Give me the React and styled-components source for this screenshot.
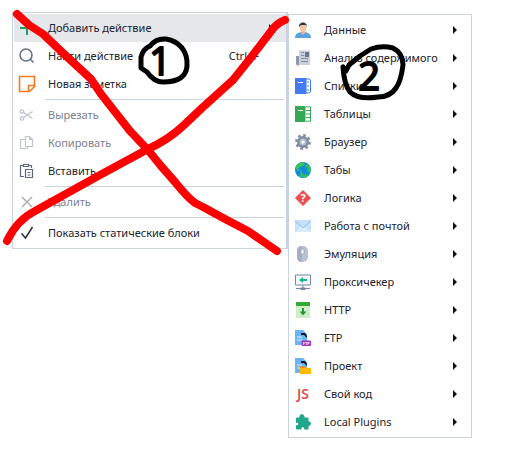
import React from "react";
import styled, { createGlobalStyle } from "styled-components";

const GlobalStyle = createGlobalStyle`
  * { box-sizing: border-box; }
  body { margin: 0; background: #fff; font-family: "Noto Sans", "Open Sans", sans-serif; }
`;

const Page = styled.main`
  position: relative;
  display: flex;
  align-items: flex-start;
  min-height: 100vh;
  padding: 12px;
`;

const Menu = styled.div`
  flex: 0 1 ${(p) => p.$basis}px;
  min-width: 0;
  padding: 1px;
  border: 1px solid #cbd3de;
  background: #fff;
`;

const MainMenu = styled(Menu)`
  padding-right: 0;
  border-right-width: 2px;
`;

const SubMenu = styled(Menu)`
  margin-top: 2px;
`;

const Item = styled.button`
  display: flex;
  align-items: center;
  width: 100%;
  height: 28px;
  padding: 0 13px 0 5px;
  border: 0;
  background: ${(p) => (p.$active ? "#e6e7eb" : "transparent")};
  color: ${(p) => (p.disabled ? "#7c818f" : "#20222e")};
  font-family: inherit;
  font-size: 11px;
  line-height: 16px;
  text-align: left;
  white-space: nowrap;
`;

const Icon = styled.svg`
  flex: none;
  width: 16px;
  height: 16px;
  margin-right: 13px;
  overflow: visible;
  fill: none;
`;

const Label = styled.span`
  flex: 1;
`;

const Shortcut = styled.kbd`
  margin-right: 14px;
  font-family: inherit;
`;

const Arrow = styled.svg`
  flex: none;
  width: 4px;
  height: 8px;
  fill: #11131c;
`;

const Separator = styled.hr`
  height: 1px;
  margin: 1px 2px 1px 31px;
  border: 0;
  background: #cbd3de;
`;

const Notes = styled.svg`
  position: absolute;
  top: 0;
  left: 0;
  width: 525px;
  height: 476px;
  pointer-events: none;
  fill: none;
  stroke-linecap: round;
  stroke-linejoin: round;
`;

const NoteNumber = styled.text`
  font-family: "Open Sans", sans-serif;
  font-size: 38px;
  font-weight: 400;
  text-anchor: middle;
  fill: #000;
  stroke: #000;
  stroke-width: 2px;
`;

const documentShape = (
  <>
    <path d="M0 0h8l4 4v11H0z" fill="#6cb4fa" />
    <path d="M6 3h4l2 3v2L9 5H6z" fill="#101420" />
    <path d="M2 7h5M2 10h5" stroke="#e2f1ff" />
  </>
);

const icons = {
  add: <path d="M8 1v14M1 8h14" stroke="#16a06e" strokeWidth="2" />,
  search: <g stroke="#667085" strokeWidth="1.6"><circle cx="7" cy="7" r="6" /><path d="m11.5 11.5 3 3" /></g>,
  note: <path d="M.5.5h15v10l-5 5H.5zM15 9.5H9.5V15" stroke="#f47a20" strokeWidth="1.6" />,
  cut: <g stroke="#bfc5cf" strokeWidth="1.3"><circle cx="3" cy="4.5" r="1.700" /><circle cx="3" cy="11.5" r="1.700" /><path d="m4.5 5.500 9 6M4.5 10.500l9-6" /></g>,
  copy: <g stroke="#bfc5cf" strokeWidth="1.2"><path d="M6 4.500H1.500v9h7v-2" /><path d="M6.500 1.500h4l3 3v7h-7zM10.500 1.500v3h3" /></g>,
  paste: <g stroke="#5d6880" strokeWidth="1.2"><path d="M5 13.500H1.500v-11h3m5 0h3V5" /><path d="M4.500 1.500h5v2h-5zM6.500 6.500h7v8h-7zM8.500 9.500h3M8.500 12h3" /></g>,
  remove: <path d="m3 3 10 10M13 3 3 13" stroke="#aeb1b6" strokeWidth="1.6" />,
  check: <path d="m2.5 8.5 4 4.5 7-11" stroke="#252832" strokeWidth="1.4" />,
  user: <>
    <path d="M0 16c0-4 3-6 8-6s8 2 8 6z" fill="#5ba0e0" />
    <path d="M6 8h4v3l-2 2-2-2z" fill="#e9b38e" />
    <ellipse cx="8" cy="5.5" rx="3.3" ry="4.3" fill="#f2c6a3" />
    <path d="M4 5c-.5-6 8.500-6 8 0l-1-2H6z" fill="#30343c" />
  </>,
  news: <>
    <path d="M4 .5h11v14.500H4z" fill="#c9d0dc" />
    <path d="M1 6h3v9.500H2L1 14z" fill="#8d98ab" />
    <path d="M10 2h4v5h-4z" fill="#68778e" />
    <path d="M6 2.500h3M6 5.500h3M6 8.500h7M6 11.500h7" stroke="#7f8ca0" />
  </>,
  lists: <>
    <path d="M11 1h2.500q2 0 2 2v10q0 2-2 2H11z" fill="#fff" stroke="#3978f0" />
    <path d="M0 0h11v16H0z" fill="#437bf0" /><path d="M3 4.500h5" stroke="#fff" />
    <path d="M13 3v10" stroke="#437bf0" strokeDasharray="2 2" />
  </>,
  tables: <>
    <path d="M0 0h10.500v16H0z" fill="#35a853" /><path d="M3 4.500h5" stroke="#fff" />
    <path d="M11 .8h4.500v14.400H11M11 4.500h5M11 8h5M11 11.500h5" stroke="#35a853" />
  </>,
  gear: <>
    <circle cx="8" cy="8" r="6" fill="#7f8aa3" />
    <circle cx="8" cy="8" r="6.700" stroke="#7f8aa3" strokeWidth="2.400" strokeDasharray="2.630 2.630" />
    <circle cx="8" cy="8" r="3.500" fill="#b7bfce" /><circle cx="8" cy="8" r="1.600" fill="#fff" />
  </>,
  globe: <>
    <circle cx="8" cy="8" r="8" fill="#118be0" />
    <path d="M8 .2C4 0 1 2.500.3 6L2 8l3 1 1 2-2 3.500 3 1.400 1-4-2-3-3-2 2-2 3-1 2-2z" fill="#36c45c" />
    <path d="M11 2c3 .5 4.800 3 5 6l-2 3-2-2 1-3-3-1zM8 13l4-1 1 2-3 2H8z" fill="#35bf58" />
  </>,
  logic: <>
    <path d="m8 .5 7.500 7.500L8 15.500.5 8z" fill="#e94e4e" stroke="#e94e4e" strokeLinejoin="round" />
    <text x="8" y="12" textAnchor="middle" fontSize="11" fontWeight="700" fill="#fff">?</text>
  </>,
  mail: <>
    <path d="M0 2h16v12H0z" fill="#c5e1fb" /><path d="m0 14 6-6h4l6 6z" fill="#d9ecfd" />
    <path d="m0 3 7 6q1 .8 2 0l7-6" stroke="#8dbbe5" />
  </>,
  mouse: <>
    <rect x="2" width="11" height="16" rx="5" fill="#b9c2d3" />
    <path d="M2 11V5q0-5 5-5v16q-5 0-5-5z" fill="#a5b0c5" />
    <rect x="6" y="3" width="3" height="5" rx="1.500" fill="#f5f7fa" stroke="#8693ab" strokeWidth=".5" />
  </>,
  proxy: <>
    <path d="M.5 1h15v10H.5z" fill="#f4faff" stroke="#77859b" />
    <path d="M8 11v3M1 14.500h14" stroke="#77859b" />
    <path d="M5.500 13.500h5v2.500h-5z" fill="#77859b" />
    <path d="m4 6 4-3v2h4v2H8v2z" fill="#13b786" />
  </>,
  http: <>
    <path d="M1 3h14v13H1z" fill="#cdeec8" /><path d="M1 0h14v4H1z" fill="#35a936" />
    <path d="M8 6v6" stroke="#239a33" strokeWidth="2" /><path d="M4.500 9.500h7L8 13.500z" fill="#239a33" />
  </>,
  ftp: <>
    {documentShape}
    <rect x="6.500" y="10.500" width="9.500" height="5.500" rx="1" fill="#9d32b8" />
    <text x="11.300" y="15" textAnchor="middle" fontSize="4" fontWeight="700" fill="#fff">FTP</text>
  </>,
  project: <>
    {documentShape}
    <path d="M5 8h4l1.500 2H16v6H5z" fill="#ffb900" /><path d="M5 8h4l1.500 2H5z" fill="#e99324" />
  </>,
  js: <text x="8" y="13" textAnchor="middle" fontSize="14" fontWeight="600" fill="#dc5054">JS</text>,
  plugins: <path d="M1.500 4H5c-1.500-4.500 5-4.500 4 0h4v4c3.500-1 3.500 4 0 3.500V15H9.500c.5-3-4-3-3.500 0H1.500v-3.500c3 .5 3-3.500 0-3z" fill="#20a789" stroke="#20a789" strokeLinejoin="round" />,
};

const mainItems = [
  { icon: "add", label: "Добавить действие", active: true, arrow: true },
  { icon: "search", label: "Найти действие", shortcut: "Ctrl+F" },
  { icon: "note", label: "Новая заметка" },
  null,
  { icon: "cut", label: "Вырезать", disabled: true },
  { icon: "copy", label: "Копировать", disabled: true },
  { icon: "paste", label: "Вставить" },
  null,
  { icon: "remove", label: "Удалить", disabled: true },
  null,
  { icon: "check", label: "Показать статические блоки" },
];

const actionItems = [
  ["user", "Данные"],
  ["news", "Анализ содержимого"],
  ["lists", "Списки"],
  ["tables", "Таблицы"],
  ["gear", "Браузер"],
  ["globe", "Табы"],
  ["logic", "Логика"],
  ["mail", "Работа с почтой"],
  ["mouse", "Эмуляция"],
  ["proxy", "Проксичекер"],
  ["http", "HTTP"],
  ["ftp", "FTP"],
  ["project", "Проект"],
  ["js", "Свой код"],
  ["plugins", "Local Plugins"],
].map(([icon, label]) => ({ icon, label, arrow: true }));

function MenuItem({ item }) {
  return (
    <Item type="button" role="menuitem" disabled={item.disabled} $active={item.active} aria-haspopup={item.arrow ? "menu" : undefined}>
      <Icon viewBox="0 0 16 16" aria-hidden="true">{icons[item.icon]}</Icon>
      <Label>{item.label}</Label>
      {item.shortcut && <Shortcut>{item.shortcut}</Shortcut>}
      {item.arrow && <Arrow viewBox="0 0 4 8" aria-hidden="true"><path d="M0 0 4 4 0 8z" /></Arrow>}
    </Item>
  );
}

export default function App() {
  return (
    <>
      <GlobalStyle />
      <Page>
        <MainMenu role="menu" $basis={276}>
          {mainItems.map((item, i) => (item ? <MenuItem key={item.label} item={item} /> : <Separator key={i} />))}
        </MainMenu>
        <SubMenu role="menu" aria-label="Добавить действие" $basis={184}>
          {actionItems.map((item) => <MenuItem key={item.label} item={item} />)}
        </SubMenu>
        <Notes viewBox="0 0 525 476">
          <g stroke="#f00" strokeWidth="8">
            <path d="M17 14 29 25 43 34 64 54 91 79 101 94 130 131 148 150 161 166 175 182 Q187 197 195 203 L203 207 225 219 248 231 277 251" />
            <path d="M285 20Q277 23 272 30L249 60 233 80 202 108 183 126Q168 140 148 149L100 175 35 211Q17 220 7 241" />
          </g>
          <g stroke="#000" strokeWidth="5">
            <path d="M150 46Q156 38 166 39C179 41 188 51 187 66C186 78 177 82 163 82Q154 82 147 72L141 68 141 57Q143 49 150 46" />
            <path d="M343 67 346 71 349 65 360 56 371 49Q382 45 393 48Q403 53 403 65Q401 81 396 88Q390 97 378 97Q358 100 350 92Q344 84 343 67" />
          </g>
          <NoteNumber x="160" y="75">1</NoteNumber>
          <NoteNumber x="369" y="90">2</NoteNumber>
        </Notes>
      </Page>
    </>
  );
}
